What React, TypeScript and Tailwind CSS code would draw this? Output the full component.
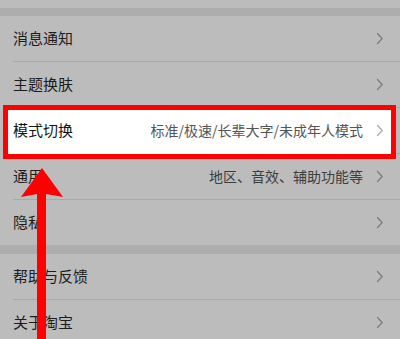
import React from "react";

const FONT = { fontFamily: '"Noto Sans CJK SC", "Noto Sans", sans-serif' };

function Chevron({ color }: { color: string }) {
  return (
    <svg width="8" height="13" viewBox="0 0 8 13" fill="none" aria-hidden>
      <path d="M1.5 1.5 L6.2 6.5 L1.5 11.5" stroke={color} strokeWidth="1.2" strokeLinecap="round" strokeLinejoin="round" />
    </svg>
  );
}

function Row({ label, hint, highlight }: { label: string; hint?: string; highlight?: boolean }) {
  return (
    <div className="relative flex h-[45px] items-center">
      {highlight && (
        <div className="absolute -top-[3px] -bottom-[6px] left-[3px] right-[4px] border-[5px] border-[#ff0000] bg-white" />
      )}
      <div className="relative flex w-full items-center pl-[13px] pr-[16px]">
        <span className={`text-[15px] ${highlight ? "text-[#141414]" : "text-[#1c1c1c]"}`}>{label}</span>
        <span className={`ml-auto mr-[13px] text-[14px] ${highlight ? "text-[#555555]" : "text-[#3c3c3c]"}`}>{hint}</span>
        <Chevron color={highlight ? "#a8a8a8" : "#7c7c7c"} />
      </div>
    </div>
  );
}

function Sep() {
  return <div className="ml-[13px] h-px bg-[#a9a9a9]" />;
}

export default function App() {
  return (
    <div className="relative h-[339px] w-[400px] overflow-hidden bg-[#bcbcbc]" style={FONT}>
      <div className="h-[8px]" />
      <div className="h-[8px] bg-[#adadad]" />
      <Row label="消息通知" />
      <Sep />
      <Row label="主题换肤" />
      <Sep />
      <Row label="模式切换" hint="标准/极速/长辈大字/未成年人模式" highlight />
      <Sep />
      <Row label="通用" hint="地区、音效、辅助功能等" />
      <Sep />
      <Row label="隐私" />
      <div className="h-[9px] bg-[#adadad]" />
      <Row label="帮助与反馈" />
      <Sep />
      <Row label="关于淘宝" />

      {/* annotation arrow */}
      <svg className="pointer-events-none absolute left-0 top-0" width="400" height="339" aria-hidden>
        <polygon points="42,168 63,197 46,194 46,339 37,339 37,194 21,197" fill="#ff0000" />
      </svg>
    </div>
  );
}
